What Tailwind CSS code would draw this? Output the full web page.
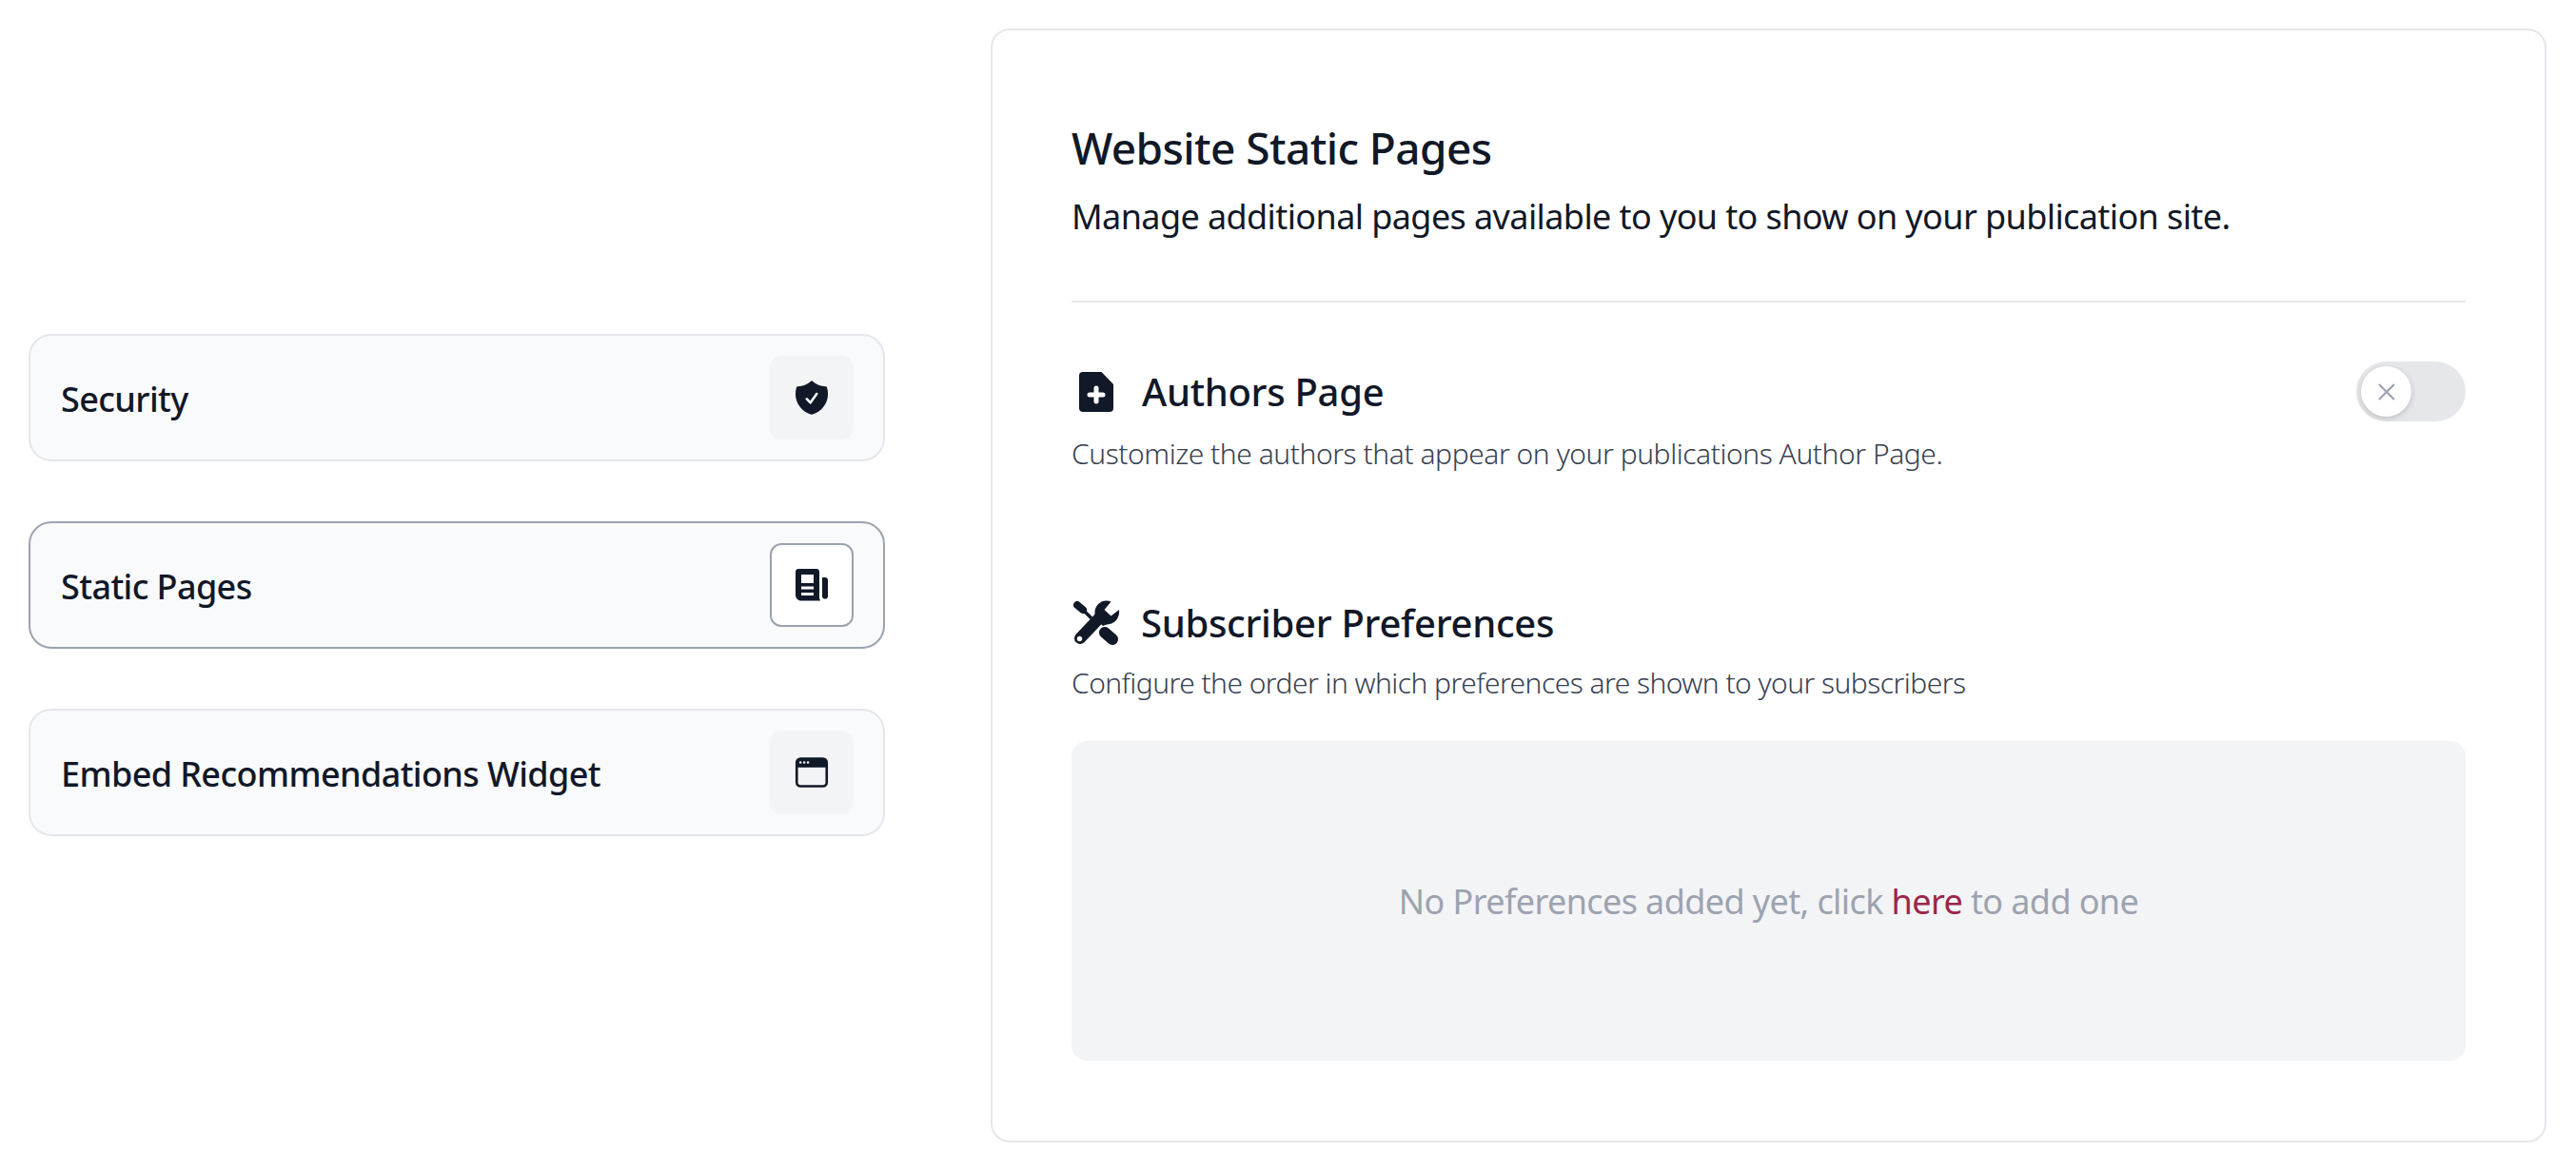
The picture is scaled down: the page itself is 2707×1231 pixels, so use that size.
<!DOCTYPE html>
<html lang="en">
<head>
  <meta charset="UTF-8" />
  <title>Website Static Pages</title>
  <script src="https://cdn.jsdelivr.net/npm/@tailwindcss/browser@4"></script>
</head>
<body class="bg-white text-[#111827] font-['Noto_Sans','Open_Sans',sans-serif]">
  <div class="flex items-center gap-[111px] w-[2707px] h-[1231px] pl-[30px] pr-[31px] py-[30px] overflow-hidden">
    <!-- left menu -->
    <div class="flex flex-col gap-[63px] w-[900px] shrink-0 -mt-[1px]">
      <div class="flex items-center justify-between h-[134px] pl-[32px] pr-[31px] bg-[#f9fafb] border-2 border-[#e5e7eb] rounded-[24px]">
        <span class="text-[36px] font-medium tracking-[-0.6px] translate-y-[2px]">Security</span>
        <div class="flex items-center justify-center w-[88px] h-[88px] bg-[#f3f4f6] rounded-[12px]">
          <svg class="w-[42px] h-[42px]" viewBox="0 0 24 24" fill="#111827"><path fill-rule="evenodd" clip-rule="evenodd" d="M12.516 2.17a.75.75 0 00-1.032 0 11.209 11.209 0 01-7.877 3.08.75.75 0 00-.722.515A12.74 12.74 0 002.25 9.75c0 5.942 4.064 10.933 9.563 12.348a.749.749 0 00.374 0c5.499-1.415 9.563-6.406 9.563-12.348 0-1.39-.223-2.73-.635-3.985a.75.75 0 00-.722-.516l-.143.001c-2.996 0-5.717-1.17-7.734-3.08zm3.094 8.016a.75.75 0 10-1.22-.872l-3.236 4.53L9.53 12.22a.75.75 0 00-1.06 1.06l2.25 2.25a.75.75 0 001.14-.094l3.75-5.25z"/></svg>
        </div>
      </div>
      <div class="flex items-center justify-between h-[134px] pl-[32px] pr-[31px] bg-[#f9fafb] border-2 border-[#9ca3af] rounded-[24px]">
        <span class="text-[36px] font-medium tracking-[-0.6px] translate-y-[2px]">Static Pages</span>
        <div class="flex items-center justify-center w-[88px] h-[88px] bg-white border-2 border-[#9ca3af] rounded-[12px]">
          <svg class="w-[34px] h-[34px]" viewBox="0 0 34 34" fill="#111827"><path fill-rule="evenodd" clip-rule="evenodd" d="M3 0h19c1.7 0 3 1.3 3 3v27c0 1.4.4 2.4 1 3.4H6c-3.3 0-6-2.7-6-6V3c0-1.700 1.300-3 3-3zM6 6v9h13V6H6zm0 12.500v3h13v-3H6zm0 6.500v3h13v-3H6z"/><path d="M28 9h3c1.700 0 3 1.300 3 3v17c0 1.500-1.200 2.600-3 2.600s-3-1.100-3-2.600V9z"/></svg>
        </div>
      </div>
      <div class="flex items-center justify-between h-[134px] pl-[32px] pr-[31px] bg-[#f9fafb] border-2 border-[#e5e7eb] rounded-[24px]">
        <span class="text-[36px] font-medium tracking-[-0.6px] translate-y-[2px]">Embed Recommendations Widget</span>
        <div class="flex items-center justify-center w-[88px] h-[88px] bg-[#f3f4f6] rounded-[12px]">
          <svg class="w-[42px] h-[42px]" viewBox="0 0 24 24" fill="#111827"><path fill-rule="evenodd" clip-rule="evenodd" d="M2.25 6a3 3 0 013-3h13.5a3 3 0 013 3v12a3 3 0 01-3 3H5.25a3 3 0 01-3-3V6zm18 3H3.75v9a1.5 1.5 0 001.5 1.5h13.5a1.5 1.5 0 001.5-1.5V9zm-15-3.750A.75.75 0 004.5 6v.008c0 .414.336.75.75.75h.008a.75.75 0 00.75-.75V6a.75.75 0 00-.75-.75H5.250zm1.500.750a.75.75 0 01.75-.75h.008a.75.75 0 01.75.75v.008a.75.75 0 01-.75.75H7.500a.75.75 0 01-.75-.75V6zm3-.750A.75.75 0 009 6v.008c0 .414.336.75.75.75h.008a.75.75 0 00.75-.75V6a.75.75 0 00-.75-.75H9.750z"/></svg>
        </div>
      </div>
    </div>

    <!-- static pages panel -->
    <div class="flex flex-col flex-1 h-[1171px] px-[83px] pt-[93px] border-2 border-[#e5e7eb] rounded-[20px] bg-white">
      <h2 class="text-[46px] leading-[60px] font-medium tracking-[-0.6px]">Website Static Pages</h2>
      <p class="mt-[18px] text-[36px] leading-[50px] tracking-[-0.6px]">Manage additional pages available to you to show on your publication site.</p>
      <div class="mt-[63px] border-t-2 border-[#e5e7eb]"></div>

      <div class="flex justify-between mt-[62px]">
        <div class="flex items-center gap-[30px] pl-[8px]">
          <svg class="w-[36px] h-[42px]" viewBox="0 0 36 42" fill="#111827"><path d="M4 0H23.500L36 13V38a4 4 0 01-4 4H4a4 4 0 01-4-4V4a4 4 0 014-4z"/><path d="M18 17v14M11 24h14" stroke="#fff" stroke-width="5" stroke-linecap="round"/></svg>
          <span class="text-[40px] leading-[60px] font-medium tracking-[-0.3px]">Authors Page</span>
        </div>
        <div class="relative w-[115px] h-[63px] rounded-full bg-[#e5e7eb]">
          <div class="absolute left-[5px] top-[5px] flex items-center justify-center w-[53px] h-[53px] rounded-full bg-white shadow-[0_2px_6px_rgba(0,0,0,0.18)]">
            <svg class="w-[24px] h-[24px]" viewBox="0 0 24 24" fill="none" stroke="#9ca3af" stroke-width="2.2"><path d="M4 4l16 16M20 4L4 20"/></svg>
          </div>
        </div>
      </div>
      <p class="mt-[11px] text-[30px] leading-[46px] font-light tracking-[-0.45px] text-[#374151]">Customize the authors that appear on your publications Author Page.</p>

      <div class="flex items-center gap-[22px] mt-[125px] pl-[2px]">
        <svg class="w-[49px] h-[48px]" viewBox="0 0 49 48" fill="#111827"><path d="M35 .5C29 0 23 5 22.500 12c-.300 3 .500 6 1.500 8l7 7c2-1 5-2 7-2 6-1 11-7 10-15l-8.500 6.500L32.500 10l7-8.500C38 1 36.500 .5 35 .5z"/><path d="M7 40L27 19" stroke="#111827" stroke-width="12" stroke-linecap="round"/><circle cx="6.500" cy="40.500" r="2.700" fill="#fff"/><path d="M4 5L10 10" stroke="#111827" stroke-width="8" stroke-linecap="round"/><path d="M9 9L19 19" stroke="#111827" stroke-width="3.500"/><path d="M33 34L41 41" stroke="#111827" stroke-width="12" stroke-linecap="round"/></svg>
        <span class="text-[40px] leading-[60px] font-medium tracking-[-0.3px]">Subscriber Preferences</span>
      </div>
      <p class="mt-[10px] text-[30px] leading-[46px] font-light tracking-[-0.55px] text-[#374151]">Configure the order in which preferences are shown to your subscribers</p>

      <div class="flex items-center justify-center h-[336px] mt-[38px] pt-[2px] rounded-[16px] bg-[#f3f4f6]">
        <p class="text-[36px] tracking-[-0.6px] text-[#9ca3af]">No Preferences added yet, click <span class="text-[#9d2449]">here</span> to add one</p>
      </div>
    </div>
  </div>
</body>
</html>
